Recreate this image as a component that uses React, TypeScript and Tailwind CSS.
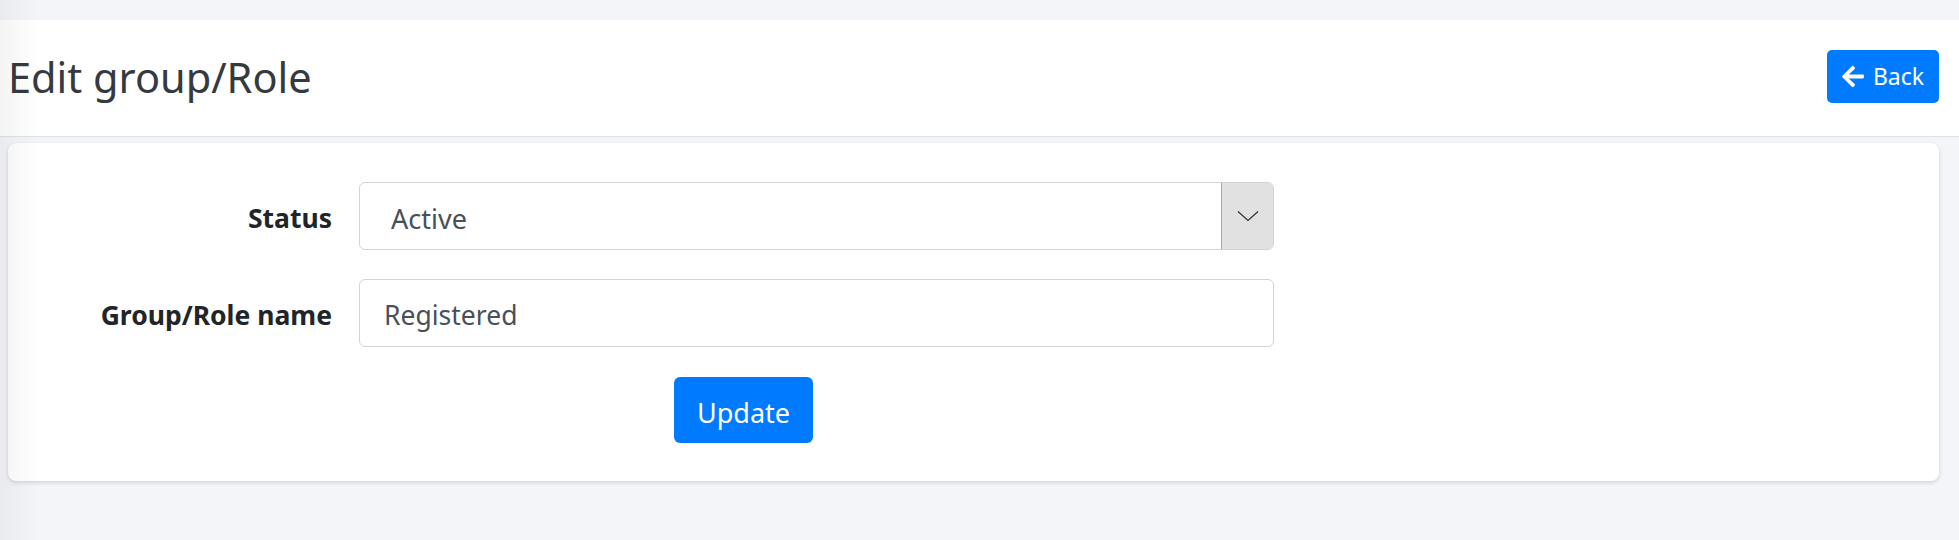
import React from "react";

function ArrowLeft() {
  return (
    <svg width="22" height="25" viewBox="0 0 448 512" fill="currentColor" aria-hidden="true">
      <path d="M257.5 445.1l-22.2 22.2c-9.4 9.4-24.6 9.4-33.9 0L7 273c-9.4-9.4-9.4-24.6 0-33.9L201.4 44.7c9.4-9.4 24.6-9.4 33.9 0l22.2 22.2c9.5 9.5 9.3 25-.4 34.3L136.6 216H424c13.3 0 24 10.7 24 24v32c0 13.3-10.7 24-24 24H136.6l120.5 114.8c9.8 9.3 10 24.8.4 34.3z" />
    </svg>
  );
}

function Chevron() {
  return (
    <svg width="22" height="12" viewBox="0 0 22 12" fill="none" aria-hidden="true">
      <path d="M1 1.5 L11 10.5 L21 1.5" stroke="#333" strokeWidth="1.3" />
    </svg>
  );
}

export default function App() {
  return (
    <div
      className="relative min-h-[540px] bg-[#f4f5f9] pt-5"
      style={{ fontFamily: '"Segoe UI", "Noto Sans", "Open Sans", sans-serif' }}
    >
      <div className="pointer-events-none absolute left-0 top-0 h-full w-[40px] bg-gradient-to-r from-[rgba(0,0,0,0.045)] to-transparent" />
      <header className="flex h-[117px] items-center justify-between border-b border-[#dee2e6] bg-white pl-2 pr-5">
        <h1 className="text-[41.5px] font-normal leading-none text-[#343a40]">Edit group/Role</h1>
        <button className="mt-[-4px] flex h-[53px] w-[112px] items-center justify-center gap-[9px] rounded-[5px] bg-[#007bff] text-[23px] leading-none text-white">
          <ArrowLeft />
          <span>Back</span>
        </button>
      </header>
      <div className="pl-2 pr-5 pt-[6px]">
        <div className="rounded-lg bg-white pb-[38px] pt-[39px] shadow-[0_2px_4px_rgba(0,0,0,0.13),0_0_1px_rgba(0,0,0,0.08)]">
          <div className="flex items-center">
            <label className="w-[324px] pt-[5px] text-right text-[26.5px] font-bold leading-none text-[#212529]">Status</label>
            <div className="ml-[27px] flex h-[68px] w-[915px] items-stretch overflow-hidden rounded-[6px] border border-[#ced4da] bg-white">
              <div className="flex flex-1 items-center pl-[31px] pt-[5px] text-[27px] leading-none text-[#495057]">Active</div>
              <div className="flex w-[52px] items-center justify-center border-l border-[#a6a6a6] bg-[#e1e1e1]">
                <Chevron />
              </div>
            </div>
          </div>
          <div className="mt-[29px] flex items-center">
            <label className="w-[324px] pt-[5px] text-right text-[26.5px] font-bold leading-none text-[#212529]">Group/Role name</label>
            <div className="ml-[27px] flex h-[68px] w-[915px] items-center rounded-[6px] border border-[#ced4da] bg-white pl-[24px] pt-[5px] text-[26.5px] leading-none text-[#495057]">
              Registered
            </div>
          </div>
          <div className="mt-[30px] flex">
            <button className="ml-[666px] flex h-[66px] w-[139px] items-center justify-center rounded-[6px] bg-[#007bff] pt-[5px] text-[27px] leading-none text-white">
              Update
            </button>
          </div>
        </div>
      </div>
    </div>
  );
}
